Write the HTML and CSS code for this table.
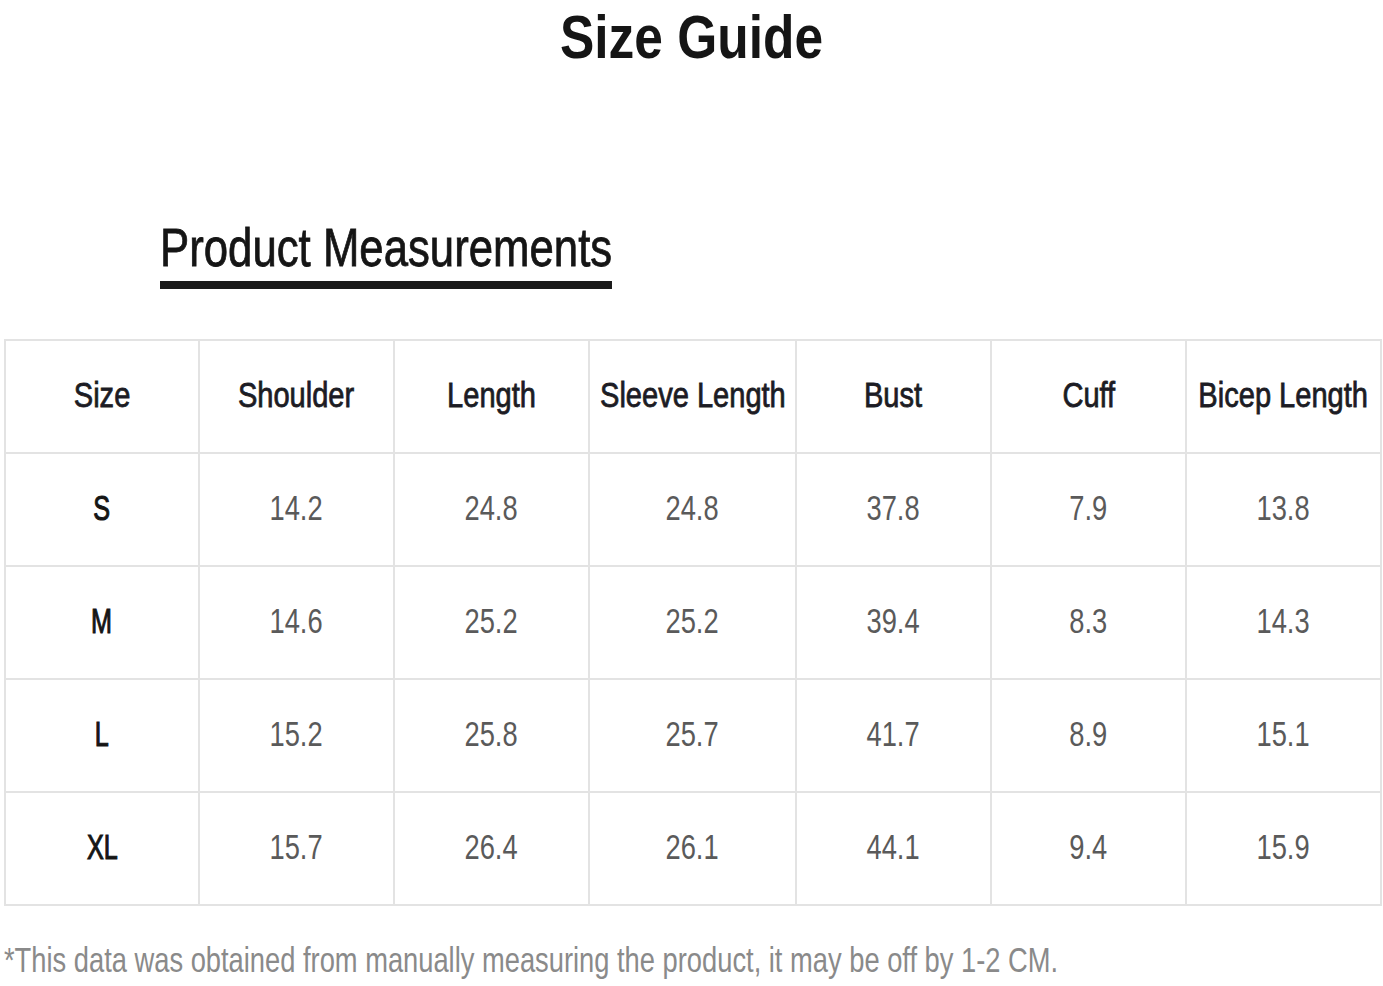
FILE: index.html
```html
<!DOCTYPE html>
<html lang="en">
<head>
<meta charset="utf-8">
<title>Size Guide</title>
<link rel="stylesheet" href="styles.css">
</head>
<body>
<div class="page">
  <div class="title-row"><h1 class="title">Size Guide</h1></div>
  <div class="section-head">
    <h2 class="section-title">Product Measurements</h2>
  </div>
  <div class="sizes">
    <div class="cell head"><span class="t">Size</span></div>
    <div class="cell head"><span class="t">Shoulder</span></div>
    <div class="cell head"><span class="t">Length</span></div>
    <div class="cell head"><span class="t">Sleeve Length</span></div>
    <div class="cell head"><span class="t">Bust</span></div>
    <div class="cell head"><span class="t">Cuff</span></div>
    <div class="cell head"><span class="t">Bicep Length</span></div>

    <div class="cell size"><span class="t">S</span></div>
    <div class="cell val"><span class="t">14.2</span></div>
    <div class="cell val"><span class="t">24.8</span></div>
    <div class="cell val"><span class="t">24.8</span></div>
    <div class="cell val"><span class="t">37.8</span></div>
    <div class="cell val"><span class="t">7.9</span></div>
    <div class="cell val"><span class="t">13.8</span></div>

    <div class="cell size"><span class="t">M</span></div>
    <div class="cell val"><span class="t">14.6</span></div>
    <div class="cell val"><span class="t">25.2</span></div>
    <div class="cell val"><span class="t">25.2</span></div>
    <div class="cell val"><span class="t">39.4</span></div>
    <div class="cell val"><span class="t">8.3</span></div>
    <div class="cell val"><span class="t">14.3</span></div>

    <div class="cell size"><span class="t">L</span></div>
    <div class="cell val"><span class="t">15.2</span></div>
    <div class="cell val"><span class="t">25.8</span></div>
    <div class="cell val"><span class="t">25.7</span></div>
    <div class="cell val"><span class="t">41.7</span></div>
    <div class="cell val"><span class="t">8.9</span></div>
    <div class="cell val"><span class="t">15.1</span></div>

    <div class="cell size"><span class="t">XL</span></div>
    <div class="cell val"><span class="t">15.7</span></div>
    <div class="cell val"><span class="t">26.4</span></div>
    <div class="cell val"><span class="t">26.1</span></div>
    <div class="cell val"><span class="t">44.1</span></div>
    <div class="cell val"><span class="t">9.4</span></div>
    <div class="cell val"><span class="t">15.9</span></div>
  </div>
  <p class="note">*This data was obtained from manually measuring the product, it may be off by 1-2 CM.</p>
</div>
</body>
</html>
```
FILE: styles.css
```css
html, body {
  margin: 0;
  padding: 0;
  background: #ffffff;
}

.page {
  width: 1383px;
  font-family: "Liberation Sans", Arial, sans-serif;
  color: #1a1a1a;
}

.title-row {
  display: flex;
  justify-content: center;
  padding-top: 6px;
}

.title {
  margin: 0;
  font-size: 62px;
  line-height: 62px;
  font-weight: 700;
  color: #151515;
  white-space: nowrap;
  transform: scaleX(0.83);
}

.section-head {
  padding: 152px 0 0 160px;
}

.section-title {
  display: inline-block;
  margin: 0;
  font-size: 54px;
  line-height: 54px;
  font-weight: 400;
  color: #151515;
  -webkit-text-stroke: 0.8px #151515;
  padding-bottom: 7px;
  border-bottom: 8px solid #1a1a1a;
  white-space: nowrap;
  transform: scaleX(0.81);
  transform-origin: left center;
}

.sizes {
  margin: 50px 0 0 4px;
  width: 1378px;
  box-sizing: border-box;
  display: grid;
  grid-template-columns: 192px 193px 193px 205px 193px 193px 193px;
  grid-auto-rows: 111px;
  gap: 2px;
  padding: 2px;
  background: #e3e3e3;
}

.cell {
  background: #ffffff;
  display: flex;
  align-items: center;
  justify-content: center;
  padding-bottom: 4px;
  box-sizing: border-box;
}

.t {
  display: inline-block;
  white-space: nowrap;
  flex: none;
}

.head .t {
  font-size: 35px;
  color: #1c1c24;
  -webkit-text-stroke: 0.8px #1c1c24;
  transform: scaleX(0.83);
}

.size .t {
  font-size: 35px;
  color: #151515;
  -webkit-text-stroke: 1.1px #151515;
  transform: scaleX(0.72);
}

.val .t {
  font-size: 35px;
  color: #5a5a5a;
  transform: scaleX(0.78);
}

.note {
  margin: 34px 0 0 4px;
  font-size: 35px;
  line-height: 40px;
  color: #8a8a8a;
  white-space: nowrap;
  transform: scaleX(0.78);
  transform-origin: left center;
}
```
